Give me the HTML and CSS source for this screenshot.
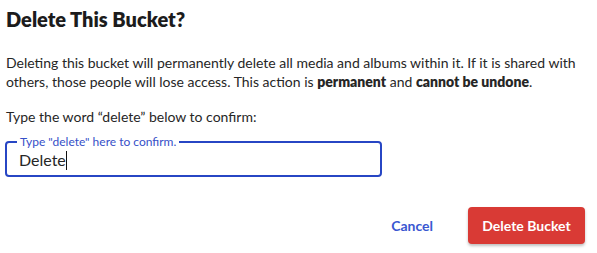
FILE: index.html
```html
<!DOCTYPE html>
<html>
<head>
<meta charset="utf-8">
<link rel="stylesheet" href="styles.css">
</head>
<body>
<div class="dialog">
  <h1 class="title">Delete This Bucket?</h1>
  <p class="desc">Deleting this bucket will permanently delete all media and albums within it. If it is shared with others, those people will lose access. This action is <b>permanent</b> and <b>cannot be undone</b>.</p>
  <p class="prompt">Type the word “delete” below to confirm:</p>
  <fieldset class="field">
    <legend class="field-label">Type "delete" here to confirm.</legend>
    <div class="field-value">Delete<span class="caret"></span></div>
  </fieldset>
  <div class="actions">
    <button class="btn-cancel">Cancel</button>
    <button class="btn-delete">Delete Bucket</button>
  </div>
</div>
</body>
</html>
```
FILE: styles.css
```css
html, body {
  margin: 0;
  padding: 0;
  background: #ffffff;
}
body {
  font-family: Lato, "Noto Sans", sans-serif;
  color: #1f1f1f;
}
.dialog {
  width: 597px;
  height: 253px;
  box-sizing: border-box;
  padding: 7px 12px 0 6px;
}
.title {
  margin: 0;
  font-size: 20px;
  font-weight: 800;
  line-height: 24px;
  color: #1c1c1c;
}
.desc {
  margin: 22px 0 0 0;
  font-size: 14px;
  line-height: 19px;
  color: #262626;
}
.desc b {
  font-weight: 800;
}
.prompt {
  margin: 16px 0 0 0;
  font-size: 14px;
  line-height: 19px;
  color: #262626;
}
.field {
  margin: 9px 0 0 -1px;
  width: 377px;
  box-sizing: border-box;
  border: 2px solid #2746c4;
  border-radius: 4px;
  padding: 1px 10px 5px 12px;
  min-width: 0;
}
.field-label {
  font-size: 12px;
  color: #3650c8;
  padding: 0 3px;
  margin-left: -2px;
  line-height: 14px;
}
.field-value {
  font-size: 16px;
  line-height: 20px;
  color: #262626;
  display: flex;
  align-items: center;
}
.caret {
  display: inline-block;
  width: 1px;
  height: 19px;
  background: #111;
}
.actions {
  display: flex;
  justify-content: flex-end;
  align-items: center;
  gap: 35px;
  margin-top: 30px;
}
.btn-cancel {
  background: none;
  border: none;
  font-family: inherit;
  font-size: 14px;
  font-weight: 700;
  color: #3a57d1;
  padding: 0;
}
.btn-delete {
  background: #d93a35;
  color: #fff;
  border: none;
  border-radius: 4px;
  font-family: inherit;
  font-size: 14px;
  font-weight: 700;
  width: 117px;
  height: 37px;
  box-shadow: 0 2px 3px rgba(0,0,0,0.25);
}
```
